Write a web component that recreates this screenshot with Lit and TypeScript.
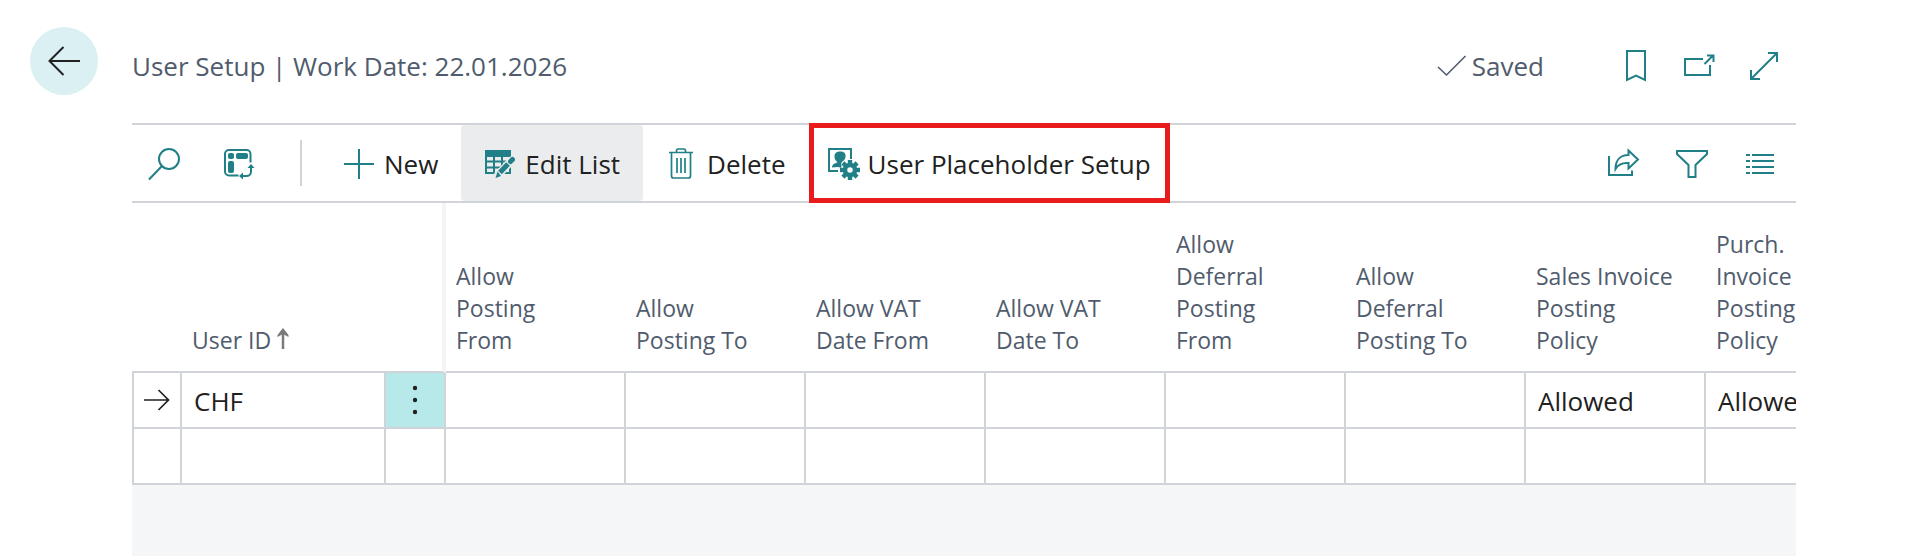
import { LitElement, html, css, svg, nothing } from "lit";
import { customElement, property } from "lit/decorators.js";
import { classMap } from "lit/directives/class-map.js";

interface Glyph {
  w: number;
  h: number;
  body: unknown;
}

const gearTeeth = [0, 45, 90, 135, 180, 225, 270, 315];

const glyphs: Record<string, Glyph> = {
  back: { w: 32, h: 30, body: svg`<path d="M32 15H2M15.500 1L1.500 15l14 14" />` },
  check: { w: 30, h: 22, body: svg`<path stroke-width="1.600" d="M1 12l8.500 8L28.500 1" />` },
  bookmark: { w: 20, h: 32, body: svg`<path d="M1 1h18v29l-9-4.500L1 30z" />` },
  popout: { w: 32, h: 24, body: svg`<path d="M19 5H1v16h25V11M20.500 10l8.500-8.500M23 1.500h6.500V8" />` },
  expand: { w: 28, h: 28, body: svg`<path d="M18 1h9v9M27 1L1 27M1 18v9h9" />` },
  search: {
    w: 32,
    h: 32,
    body: svg`<circle cx="21" cy="11" r="10" /><path d="M14 18L1 31.500" />`,
  },
  analyze: {
    w: 32,
    h: 32,
    body: svg`
      <path d="M27.500 14.500V6a4 4 0 0 0-4-4H6a4 4 0 0 0-4 4v17.500a4 4 0 0 0 4 4h9.500M28 19v4.500a4.500 4.500 0 0 1-4.500 4.500H19" />
      <g class="solid">
        <rect x="5" y="5" width="6" height="6" rx="2" />
        <rect x="13" y="5" width="12" height="6" rx="2" />
        <rect x="5" y="13" width="6" height="12" rx="2" />
        <path d="M28 16l3.500 4h-7zM16 28l4-3.500v7z" />
      </g>`,
  },
  plus: { w: 30, h: 30, body: svg`<path d="M15 0v30M0 15h30" />` },
  editList: {
    w: 30,
    h: 30,
    body: svg`
      <path class="solid" d="M0 1h26v7H0z" />
      <path d="M1 6v18h24V6M1 12.500h24M1 18.500h24M9 6v18M17 6v18" />
      <path class="halo" d="M12 27L28 10" />
      <path class="solid" d="M10.500 29l2-6.500 3.500 4.500z" />
      <path stroke-width="5" d="M15 23.500l8-8.500" />
      <path stroke-width="5" stroke-linecap="round" d="M25.500 12.500l2-2" />`,
  },
  trash: {
    w: 30,
    h: 32,
    body: svg`<path transform="translate(2 0)" stroke-width="1.700" d="M0 4.500h24M7.500 4.500V2.500a1.500 1.500 0 0 1 1.500-1.500h6a1.500 1.500 0 0 1 1.500 1.500v2M2.500 4.500V28a2 2 0 0 0 2 2h15a2 2 0 0 0 2-2V4.500M8 10v15M12 10v15M16 10v15" />`,
  },
  userSetup: {
    w: 30,
    h: 32,
    body: svg`
      <path d="M10 23H1V1h22v10" />
      <path class="solid" d="M12 3.500c4 0 6 1.500 5.500 5.500-.3 2.500-2 4-3.500 4.800l-1 2.200 1 4-4-1-6 .5c0-2.500 1-3.500 4-4.500l1.500-1c-2-1.200-3-3-3-5.500 0-3.500 2-5 5.500-5z" />
      <circle class="halo-fill" cx="22" cy="22" r="9" />
      <g class="solid" transform="translate(22 22)">
        ${gearTeeth.map((a) => svg`<rect x="-2.200" y="-10" width="4.400" height="5" transform="rotate(${a})" />`)}
      </g>
      <circle cx="22" cy="22" r="5" stroke-width="4.500" />`,
  },
  share: {
    w: 32,
    h: 32,
    body: svg`<path d="M1 8v19h23v-4.500M20.500 2.500l9.500 9-9.500 9V15C14 14.500 10 16.500 7.500 21c0-9 5-14 13-14z" />`,
  },
  filter: { w: 32, h: 28, body: svg`<path d="M1 1h30v3L19.500 15v12h-7V15L1 4z" />` },
  list: {
    w: 28,
    h: 20,
    body: svg`<path d="M0 1h4M6 1h22M0 7h4M6 7h22M0 13h4M6 13h22M0 19h4M6 19h22" />`,
  },
  sort: {
    w: 12,
    h: 24,
    body: svg`<path stroke-width="2.500" d="M6 21V4" /><path class="solid" d="M6 0l5.500 7v2L6 6 .5 9V7z" />`,
  },
  current: { w: 26, h: 22, body: svg`<path stroke-width="1.700" d="M0 11h24.500M14.500 1l10 10-10 10" />` },
  more: {
    w: 6,
    h: 30,
    body: svg`<g class="solid"><circle cx="3" cy="3" r="2.200" /><circle cx="3" cy="15" r="2.200" /><circle cx="3" cy="27" r="2.200" /></g>`,
  },
};

@customElement("line-icon")
export class LineIcon extends LitElement {
  @property() name = "";

  static styles = css`
    :host {
      display: flex;
      flex: none;
    }
    svg {
      display: block;
      overflow: visible;
      fill: none;
      stroke: currentColor;
      stroke-width: 2;
    }
    .solid {
      fill: currentColor;
      stroke: none;
    }
    .halo {
      stroke: var(--icon-ground, #fff);
      stroke-width: 8;
    }
    .halo-fill {
      fill: var(--icon-ground, #fff);
      stroke: none;
    }
  `;

  render() {
    const g = glyphs[this.name];
    return g
      ? html`<svg width=${g.w} height=${g.h} viewBox="0 0 ${g.w} ${g.h}" aria-hidden="true">${g.body}</svg>`
      : nothing;
  }
}

const columns = [
  "Allow Posting From",
  "Allow Posting To",
  "Allow VAT Date From",
  "Allow VAT Date To",
  "Allow Deferral Posting From",
  "Allow Deferral Posting To",
  "Sales Invoice Posting Policy",
  "Purch. Invoice Posting Policy",
];

const rows = [
  { id: "CHF", current: true, values: ["", "", "", "", "", "", "Allowed", "Allowed"] },
  { id: "", current: false, values: ["", "", "", "", "", "", "", ""] },
];

const actions = [
  { icon: "plus", label: "New", kind: "" },
  { icon: "editList", label: "Edit List", kind: "active" },
  { icon: "trash", label: "Delete", kind: "" },
  { icon: "userSetup", label: "User Placeholder Setup", kind: "marked" },
];

@customElement("app-root")
export class AppRoot extends LitElement {
  static styles = css`
    :host {
      display: grid;
      grid-template-columns: 132px minmax(0, 1fr) 131px;
      min-height: 100vh;
      background: #fff;
      color: #212121;
      font-family: "Open Sans", "Noto Sans", sans-serif;
      font-size: 26px;
      line-height: 36px;
    }
    button {
      display: flex;
      align-items: center;
      justify-content: center;
      margin: 0;
      padding: 0;
      border: 0;
      background: none;
      color: inherit;
      font: inherit;
      white-space: nowrap;
      cursor: pointer;
    }
    line-icon {
      color: #217f87;
    }
    .rail {
      padding: 27px 0 0 30px;
    }
    .back {
      width: 68px;
      height: 68px;
      border-radius: 50%;
      background: #daf0f2;
    }
    .back line-icon,
    .rowmark line-icon,
    .more line-icon {
      color: #212121;
    }
    main {
      display: flex;
      flex-direction: column;
    }
    header {
      display: flex;
      align-items: center;
      padding: 48px 0 39px;
      color: #505c6d;
    }
    h1 {
      flex: 1;
      margin: 0;
      font: inherit;
    }
    .saved {
      display: flex;
      align-items: center;
      gap: 5px;
      margin-right: 60px;
    }
    .saved line-icon {
      color: inherit;
    }
    .head-button {
      width: 64px;
      height: 36px;
    }
    .toolbar {
      display: flex;
      height: 76px;
      padding-right: 2px;
      border-top: 2px solid #d0d3d8;
      border-bottom: 2px solid #d0d3d8;
    }
    .toolbar button {
      padding-top: 2px;
    }
    .tool {
      width: 64px;
      margin-right: 11px;
    }
    .divider {
      width: 2px;
      height: 46px;
      margin: 15px 18px 0;
      background: #d0d3d8;
    }
    .toolbar .action {
      gap: 10px;
      padding: 2px 23px 0 24px;
      border-radius: 4px;
    }
    .toolbar .active {
      --icon-ground: #ebecee;
      background: #ebecee;
    }
    .toolbar .marked {
      margin: -2px 0;
      padding: 2px 14px 0;
      border: 5px solid #e81c1c;
      border-radius: 0;
    }
    .spacer {
      flex: 1;
    }
    .view {
      width: 68px;
    }
    .grid {
      flex: 1;
      overflow: hidden;
      background: #f5f6f8;
    }
    table {
      width: 1754px;
      table-layout: fixed;
      border-collapse: separate;
      border-spacing: 0;
      background: #fff;
    }
    .c-mark {
      width: 50px;
    }
    .c-id {
      width: 204px;
    }
    .c-more {
      width: 60px;
    }
    .c-data {
      width: 180px;
    }
    th {
      box-sizing: border-box;
      height: 170px;
      padding: 0 40px 15px 10px;
      border-bottom: 2px solid #d0d3d8;
      color: #505c6d;
      font-size: 23px;
      font-weight: 400;
      line-height: 32px;
      text-align: left;
      vertical-align: bottom;
    }
    th.wide {
      padding-right: 30px;
    }
    th.frozen {
      border-right: 4px solid #f4f4f5;
      padding: 0;
    }
    .sorted {
      display: flex;
      align-items: center;
      gap: 6px;
    }
    .sorted line-icon {
      color: #7a7a7a;
    }
    td {
      box-sizing: border-box;
      height: 56px;
      padding: 2px 0 0 12px;
      border-right: 2px solid #d0d3d8;
      border-bottom: 2px solid #d0d3d8;
    }
    .rowmark {
      border-left: 2px solid #d0d3d8;
      padding: 0 0 0 10px;
    }
    .options {
      padding: 0;
    }
    .more {
      width: 100%;
      height: 54px;
      background: #b7e9eb;
    }
  `;

  private headButton(icon: string, label: string) {
    return html`<button class="head-button" aria-label=${label}><line-icon name=${icon}></line-icon></button>`;
  }

  private viewButton(icon: string, label: string) {
    return html`<button class="view" aria-label=${label}><line-icon name=${icon}></line-icon></button>`;
  }

  render() {
    return html`
      <nav class="rail">
        <button class="back" aria-label="Back"><line-icon name="back"></line-icon></button>
      </nav>
      <main>
        <header>
          <h1>User Setup | Work Date: 22.01.2026</h1>
          <div class="saved"><line-icon name="check"></line-icon><span>Saved</span></div>
          ${this.headButton("bookmark", "Bookmark")}
          ${this.headButton("popout", "Open in new window")}
          ${this.headButton("expand", "Expand")}
        </header>
        <div class="toolbar" role="toolbar">
          <button class="tool" aria-label="Search"><line-icon name="search"></line-icon></button>
          <button class="tool" aria-label="Analyze"><line-icon name="analyze"></line-icon></button>
          <div class="divider"></div>
          ${actions.map(
            (a) => html`<button
              class=${classMap({ action: true, active: a.kind === "active", marked: a.kind === "marked" })}
            >
              <line-icon name=${a.icon}></line-icon><span>${a.label}</span>
            </button>`
          )}
          <div class="spacer"></div>
          ${this.viewButton("share", "Share")}
          ${this.viewButton("filter", "Filter")}
          ${this.viewButton("list", "List view")}
        </div>
        <div class="grid">
          <table>
            <colgroup>
              <col class="c-mark" />
              <col class="c-id" />
              <col class="c-more" />
              ${columns.map(() => html`<col class="c-data" />`)}
            </colgroup>
            <thead>
              <tr>
                <th></th>
                <th aria-sort="ascending">
                  <div class="sorted">User ID<line-icon name="sort"></line-icon></div>
                </th>
                <th class="frozen"></th>
                ${columns.map(
                  (c) => html`<th class=${classMap({ wide: c.startsWith("Sales") })}>${c}</th>`
                )}
              </tr>
            </thead>
            <tbody>
              ${rows.map(
                (r) => html`<tr>
                  <td class="rowmark">
                    ${r.current ? html`<line-icon name="current"></line-icon>` : nothing}
                  </td>
                  <td>${r.id}</td>
                  <td class="options">
                    ${r.current
                      ? html`<button class="more" aria-label="Show more options">
                          <line-icon name="more"></line-icon>
                        </button>`
                      : nothing}
                  </td>
                  ${r.values.map((v) => html`<td>${v}</td>`)}
                </tr>`
              )}
            </tbody>
          </table>
        </div>
      </main>
    `;
  }
}
